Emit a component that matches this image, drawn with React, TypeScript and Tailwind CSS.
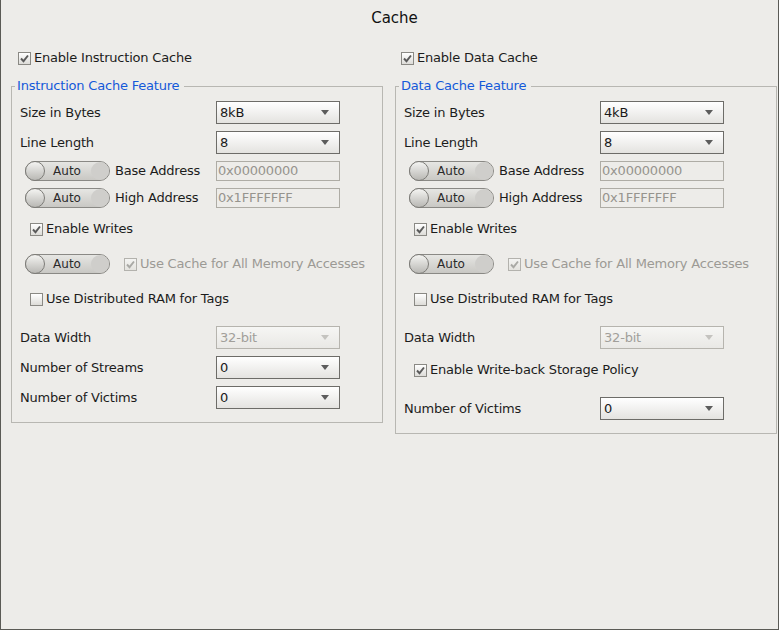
import React from "react";

const FONT = "font-['DejaVu_Sans',sans-serif]";

function Check({ checked, disabled }: { checked?: boolean; disabled?: boolean }) {
  return (
    <div
      className={`w-[13px] h-[13px] shrink-0 border flex items-center justify-center bg-gradient-to-b ${
        disabled
          ? "border-[#b3b2ad] from-[#f4f4f2] to-[#e4e3df]"
          : "border-[#8a8984] from-[#ffffff] to-[#dddcd8]"
      }`}
    >
      {checked && (
        <svg width="11" height="11" viewBox="0 0 11 11">
          <path
            d="M2 5.5 L4.5 8.2 L9 2.5"
            fill="none"
            stroke={disabled ? "#a9a9a5" : "#5a5a5a"}
            strokeWidth="1.9"
          />
        </svg>
      )}
    </div>
  );
}

function CheckRow({
  label,
  checked,
  disabled,
}: {
  label: string;
  checked?: boolean;
  disabled?: boolean;
}) {
  return (
    <div className="flex items-center gap-[3px]">
      <Check checked={checked} disabled={disabled} />
      <span className={disabled ? "text-[#9c9a95]" : "text-[#1c1c1c]"}>{label}</span>
    </div>
  );
}

function Select({ value, disabled }: { value: string; disabled?: boolean }) {
  return (
    <div
      className={`w-[124px] h-[23px] border flex items-center pl-[3px] pr-[10px] bg-gradient-to-b ${
        disabled
          ? "border-[#b6b4ae] from-[#f6f6f4] to-[#e9e8e5] text-[#a19f9a]"
          : "border-[#6d6c68] from-[#ffffff] to-[#e4e3e0] text-[#1a1a1a]"
      }`}
    >
      <span className="flex-1">{value}</span>
      <svg width="8" height="5" viewBox="0 0 8 5">
        <path d="M0 0 L8 0 L4 5 Z" fill={disabled ? "#c4c3bf" : "#5c5c5c"} />
      </svg>
    </div>
  );
}

function TextBox({ value }: { value: string }) {
  return (
    <div className="w-[124px] h-[20px] border border-[#aeaca5] flex items-center pl-[1px] text-[#96948e]">
      {value}
    </div>
  );
}

function Toggle() {
  return (
    <div className="w-[85px] h-[20px] rounded-full border border-[#8a8985] bg-gradient-to-b from-[#e6e6e3] to-[#c9c8c4] flex items-center justify-between shrink-0 tracking-normal">
      <div className="w-[20px] h-[20px] -ml-[1px] rounded-full border border-[#7d7c78] bg-gradient-to-b from-[#f4f4f2] to-[#b9b8b4]" />
      <span className="text-[12px] text-[#2a2a2a] -ml-[2px]">Auto</span>
      <div className="w-[18px] h-[18px] rounded-full bg-[#cfcecb]" />
    </div>
  );
}

function LabelRow({ label, children }: { label: string; children: React.ReactNode }) {
  return (
    <div className="flex items-center h-[23px]">
      <span className="w-[196px] text-[#1c1c1c]">{label}</span>
      {children}
    </div>
  );
}

function ToggleRow({ label, value }: { label: string; value: string }) {
  return (
    <div className="flex items-center h-[20px]">
      <div className="w-[196px] flex items-center pl-[5px] gap-[5px]">
        <Toggle />
        <span className="text-[#1c1c1c]">{label}</span>
      </div>
      <TextBox value={value} />
    </div>
  );
}

function Panel({
  enableLabel,
  legend,
  size,
  data,
}: {
  enableLabel: string;
  legend: string;
  size: string;
  data?: boolean;
}) {
  return (
    <div className="flex flex-col">
      <div className={`h-[20px] mt-[11px] flex items-center ${data ? "pl-[6px]" : "pl-[7px]"}`}>
        <CheckRow label={enableLabel} checked />
      </div>
      <fieldset className="mt-[10px] border border-[#b8b7b2] pl-[8px] pb-[13px]">
        <legend className="-ml-[5px] pl-[2px] pr-[5px] text-[#1459d9] leading-[16px]">{legend}</legend>
        <div className="flex flex-col pt-[7px]">
          <LabelRow label="Size in Bytes">
            <Select value={size} />
          </LabelRow>
          <div className="mt-[7px]">
            <LabelRow label="Line Length">
              <Select value="8" />
            </LabelRow>
          </div>
          <div className="mt-[7px]">
            <ToggleRow label="Base Address" value="0x00000000" />
          </div>
          <div className="mt-[7px]">
            <ToggleRow label="High Address" value="0x1FFFFFFF" />
          </div>
          <div className="mt-[11px] h-[20px] flex items-center pl-[10px]">
            <CheckRow label="Enable Writes" checked />
          </div>
          <div className="mt-[15px] h-[20px] flex items-center pl-[5px] gap-[14px]">
            <Toggle />
            <CheckRow label="Use Cache for All Memory Accesses" checked disabled />
          </div>
          <div className="mt-[15px] h-[20px] flex items-center pl-[10px]">
            <CheckRow label="Use Distributed RAM for Tags" />
          </div>
          <div className="mt-[17px]">
            <LabelRow label="Data Width">
              <Select value="32-bit" disabled />
            </LabelRow>
          </div>
          {data ? (
            <>
              <div className="mt-[11px] h-[20px] flex items-center pl-[10px]">
                <CheckRow label="Enable Write-back Storage Policy" checked />
              </div>
              <div className="mt-[17px]">
                <LabelRow label="Number of Victims">
                  <Select value="0" />
                </LabelRow>
              </div>
            </>
          ) : (
            <>
              <div className="mt-[7px]">
                <LabelRow label="Number of Streams">
                  <Select value="0" />
                </LabelRow>
              </div>
              <div className="mt-[7px]">
                <LabelRow label="Number of Victims">
                  <Select value="0" />
                </LabelRow>
              </div>
            </>
          )}
        </div>
      </fieldset>
    </div>
  );
}

export default function App() {
  return (
    <div
      className={`w-[779px] h-[630px] bg-[#edece9] border-x border-b border-[#5a5a55] flex flex-col text-[13px] tracking-[-0.2px] ${FONT}`}
    >
      <div className="h-[37px] flex items-center justify-center pl-[10px] text-[15px] text-[#111] tracking-normal">
        Cache
      </div>
      <div className="flex pl-[10px] gap-[12px]">
        <div className="w-[372px]">
          <Panel enableLabel="Enable Instruction Cache" legend="Instruction Cache Feature" size="8kB" />
        </div>
        <div className="w-[382px]">
          <Panel enableLabel="Enable Data Cache" legend="Data Cache Feature" size="4kB" data />
        </div>
      </div>
    </div>
  );
}
